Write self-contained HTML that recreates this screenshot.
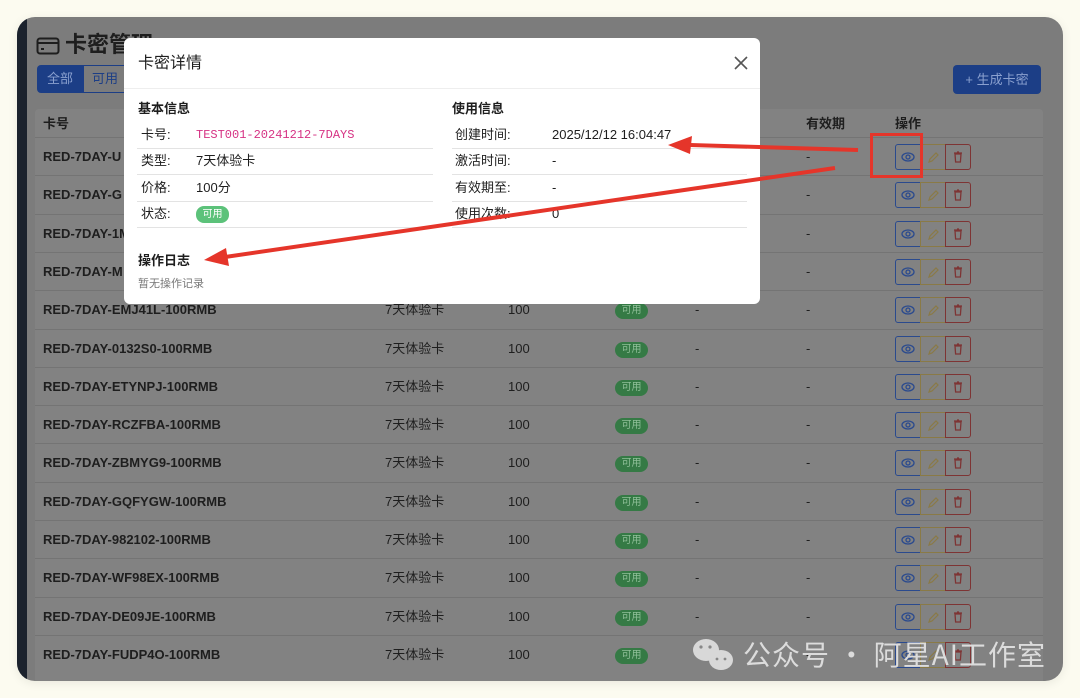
<!DOCTYPE html>
<html><head><meta charset="utf-8"><style>
*{margin:0;padding:0;box-sizing:border-box}
body{width:1080px;height:698px;background:#fcfbf0;position:relative;overflow:hidden;font-family:"Liberation Sans","Noto Sans CJK SC",sans-serif;color:#1e1e1e}
.win{position:absolute;left:17px;top:17px;width:1046px;height:664px;border-radius:18px;background:#7c7c7c;overflow:hidden;box-shadow:0 2px 10px rgba(0,0,0,.08)}
.strip{position:absolute;left:0;top:0;width:10px;height:100%;background:#1b222d}
.a{position:absolute;white-space:nowrap;line-height:18px}
.tbl{position:absolute;left:18px;top:92px;width:1008px;height:580px;background:#828282;border-radius:4px}
.row{position:absolute;left:18px;width:1008px;height:38.3px;border-top:1px solid #747474}
.row span{position:absolute;top:11px;font-size:13px;line-height:16px;height:16px}
.b{font-weight:bold}
.badge{position:absolute;top:12px;left:580px;width:33px;height:16px;border-radius:8px;background:#357a45;color:#8fbf98;font-size:10px;text-align:center;line-height:16px}
.ops{position:absolute;left:860px;top:6px;width:76px;height:26px}
.ops div{position:absolute;top:0;width:26px;height:26px;border:1px solid}
.modal{position:absolute;left:124px;top:38px;width:636px;height:266px;background:#fff;border-radius:6px}
.m{position:absolute;font-size:13px;white-space:nowrap;line-height:16px;height:16px}
.ml{position:absolute;height:1px;background:#e3e3e3}
</style></head><body>
<div class="win">
<div class="strip"></div>
<svg class="a" style="left:19px;top:20px" width="24" height="18" viewBox="0 0 24 18"><rect x="1.5" y="1.5" width="21" height="15" rx="2.5" fill="none" stroke="#1e1e1e" stroke-width="2"/><line x1="2" y1="6" x2="22" y2="6" stroke="#1e1e1e" stroke-width="2"/><rect x="5" y="11" width="3" height="2" fill="#1e1e1e"/></svg>
<div class="a b" style="left:48px;top:15px;font-size:22px;line-height:26px">卡密管理</div>
<div class="a" style="left:20px;top:48px;width:46px;height:28px;background:#1c3e86;border-radius:4px 0 0 4px;color:#8aa0cf;font-size:13px;text-align:center;line-height:28px">全部</div>
<div class="a" style="left:66px;top:48px;width:50px;height:28px;border:1px solid #1c3e86;color:#1c3e86;font-size:13px;line-height:26px;padding-left:8px">可用</div>
<div class="a" style="left:936px;top:48px;width:88px;height:29px;background:#1c3e86;border-radius:4px;color:#8aa0cf;font-size:13px;text-align:center;line-height:29px">+ 生成卡密</div>
<div class="tbl"></div>
<div class="a b" style="left:26px;top:98px;font-size:13px">卡号</div>
<div class="a b" style="left:789px;top:98px;font-size:13px">有效期</div>
<div class="a b" style="left:878px;top:98px;font-size:13px">操作</div>
</div>
<div id="rows"></div>
<script>
var names=["U","G","1M","M","EMJ41L","0132S0","ETYNPJ","RCZFBA","ZBMYG9","GQFYGW","982102","WF98EX","DE09JE","FUDP4O"];
var h="";
for(var i=0;i<14;i++){var t=137+i*38.3;
h+='<div class="row" style="position:absolute;left:35px;top:'+t+'px"><span class="b" style="left:8px">RED-7DAY-'+names[i]+(i<4?'':'-100RMB')+'</span><span style="left:350px">7天体验卡</span><span style="left:473px">100</span><div class="badge">可用</div><span style="left:660px">-</span><span style="left:771px">-</span><div class="ops"><div style="left:0;border-color:#2a4a8e;border-radius:3px 0 0 3px"><svg width="24" height="24" viewBox="0 0 24 24"><ellipse cx="12" cy="12" rx="6" ry="4" fill="none" stroke="#2a4a8e" stroke-width="1.3"/><circle cx="12" cy="12" r="2" fill="none" stroke="#2a4a8e" stroke-width="1.3"/></svg></div><div style="left:25px;border-color:#8a7a46"><svg width="24" height="24" viewBox="0 0 24 24"><path d="M8 17l1-3 6-6 2 2-6 6z" fill="none" stroke="#8a7a46" stroke-width="1.2"/></svg></div><div style="left:50px;border-color:#7e3434;border-radius:0 3px 3px 0"><svg width="24" height="24" viewBox="0 0 24 24"><path d="M8 8h8M11 7h2M9 9h6l-.6 8h-4.8z" fill="none" stroke="#7e3434" stroke-width="1.3"/></svg></div></div></div>';}
document.getElementById("rows").innerHTML=h;
</script>
<div class="modal">
<div class="m" style="left:14px;top:16px;font-size:16px;line-height:20px;height:20px">卡密详情</div>
<svg class="a" style="left:610px;top:18px" width="14" height="14"><path d="M1 1L13 13M13 1L1 13" stroke="#555" stroke-width="1.6"/></svg>
<div class="ml" style="left:0;top:50px;width:636px;background:#eee"></div>
<div class="m b" style="left:14px;top:63px">基本信息</div>
<div class="m" style="left:17px;top:89px">卡号:</div><div class="m" style="left:72px;top:89px;font-family:'Liberation Mono',monospace;font-size:12px;color:#d63384">TEST001-20241212-7DAYS</div>
<div class="ml" style="left:13px;top:110px;width:296px"></div>
<div class="m" style="left:17px;top:115px">类型:</div><div class="m" style="left:72px;top:115px">7天体验卡</div>
<div class="ml" style="left:13px;top:136px;width:296px"></div>
<div class="m" style="left:17px;top:142px">价格:</div><div class="m" style="left:72px;top:142px">100分</div>
<div class="ml" style="left:13px;top:163px;width:296px"></div>
<div class="m" style="left:17px;top:168px">状态:</div><div class="m" style="left:72px;top:168px;width:33px;height:17px;border-radius:8px;background:#5cc27a;color:#fff;font-size:10px;text-align:center;line-height:17px">可用</div>
<div class="ml" style="left:13px;top:189px;width:296px"></div>
<div class="m b" style="left:328px;top:63px">使用信息</div>
<div class="m" style="left:331px;top:89px">创建时间:</div><div class="m" style="left:428px;top:89px">2025/12/12 16:04:47</div>
<div class="ml" style="left:328px;top:110px;width:295px"></div>
<div class="m" style="left:331px;top:115px">激活时间:</div><div class="m" style="left:428px;top:115px">-</div>
<div class="ml" style="left:328px;top:136px;width:295px"></div>
<div class="m" style="left:331px;top:142px">有效期至:</div><div class="m" style="left:428px;top:142px">-</div>
<div class="ml" style="left:328px;top:163px;width:295px"></div>
<div class="m" style="left:331px;top:168px">使用次数:</div><div class="m" style="left:428px;top:168px">0</div>
<div class="ml" style="left:328px;top:189px;width:295px"></div>
<div class="m b" style="left:14px;top:215px">操作日志</div>
<div class="m" style="left:14px;top:238px;font-size:11px;color:#777">暂无操作记录</div>
</div>
<svg class="a" style="left:0;top:0" width="1080" height="698">
<rect x="871.5" y="134.5" width="50" height="42" fill="none" stroke="#e5352a" stroke-width="3"/>
<path d="M858 150L690 145" stroke="#e5352a" stroke-width="4"/>
<path d="M668 145L692 136L690 154z" fill="#e5352a"/>
<path d="M835 168L225 257" stroke="#e5352a" stroke-width="4"/>
<path d="M204 260L226 248L229 266z" fill="#e5352a"/>
<g fill="#d8d8d8"><ellipse cx="706" cy="650" rx="13" ry="11"/><ellipse cx="721" cy="660" rx="12" ry="10"/></g>
<g fill="#888"><circle cx="701" cy="647" r="1.6"/><circle cx="710" cy="647" r="1.6"/><circle cx="717" cy="659" r="1.4"/><circle cx="725" cy="659" r="1.4"/></g>
<text x="743" y="665" font-size="28" textLength="302" fill="#dcdcdc" font-family="Noto Sans CJK SC,sans-serif">公众号 · 阿星AI工作室</text>
</svg>
</body></html>
